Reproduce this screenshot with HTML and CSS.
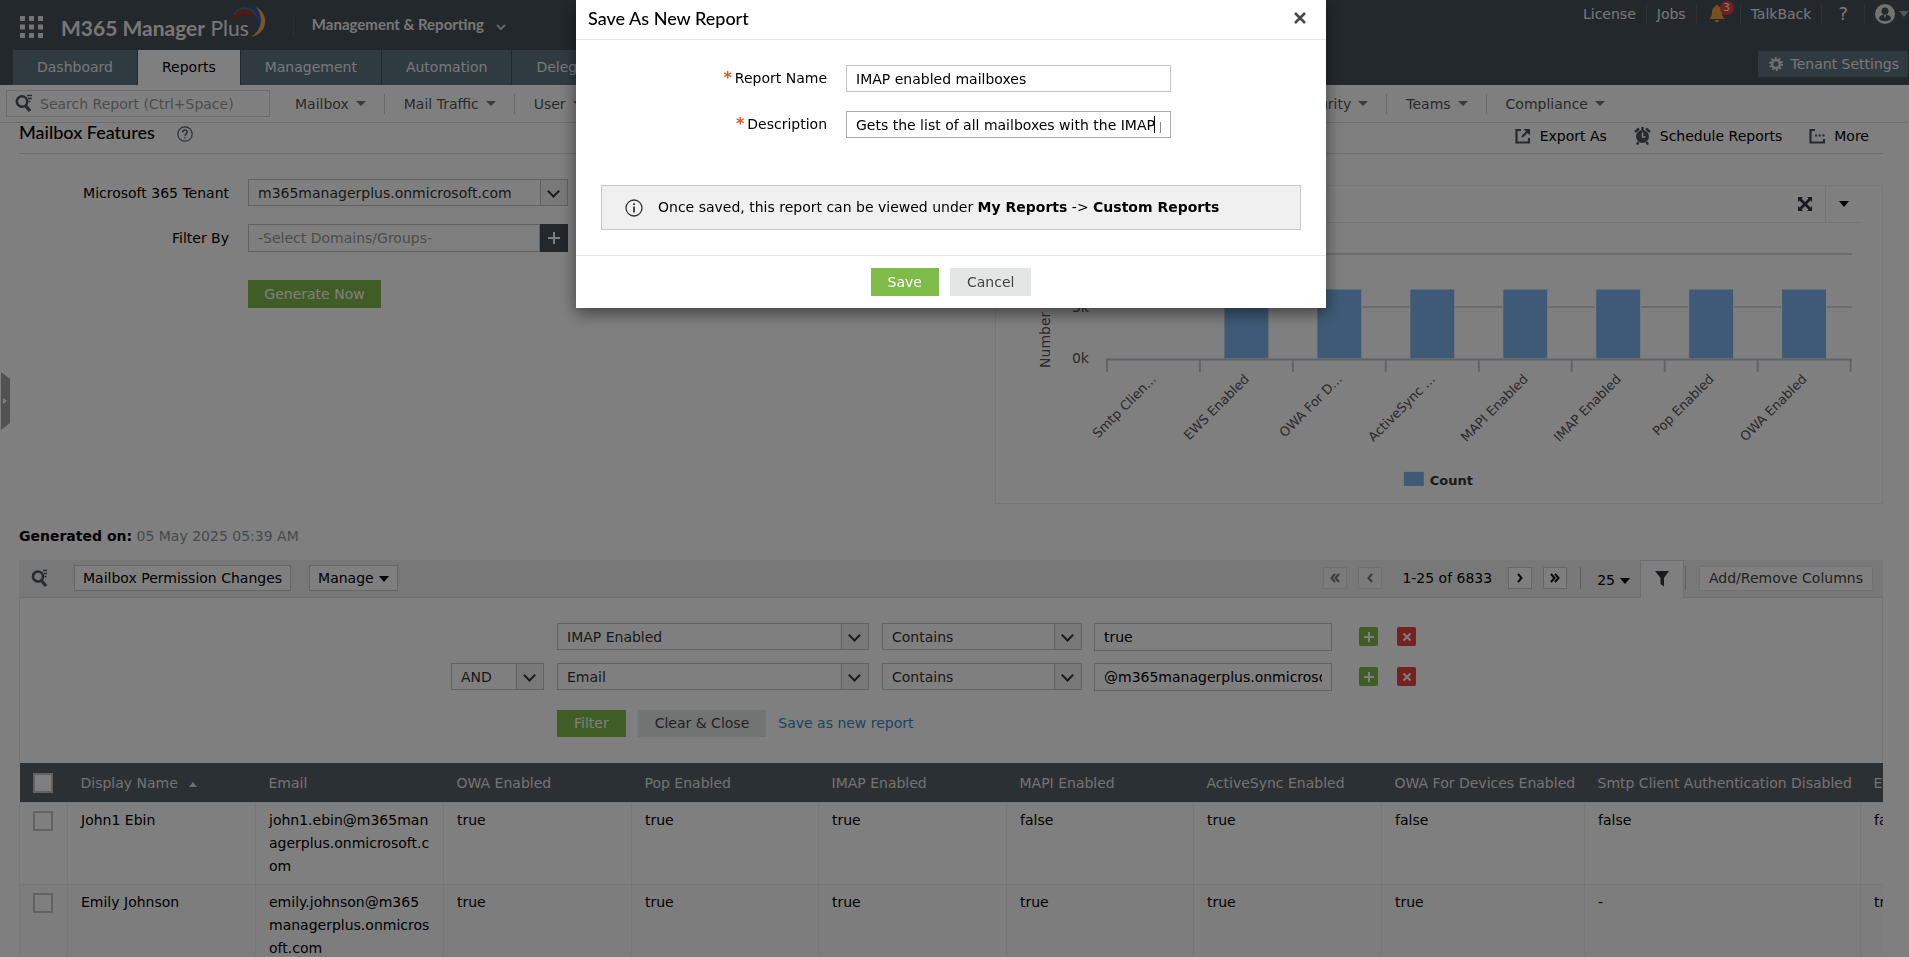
FILE: index.html
```html
<!DOCTYPE html>
<html lang="en">
<head>
  <meta charset="UTF-8">
  <meta name="viewport" content="width=device-width, initial-scale=1.0">
  <title>M365 Manager Plus - Mailbox Features</title>
  <link rel="stylesheet" href="styles.css">
</head>
<body>

  <!-- Top header -->
  <header class="header">
    <div class="header-top">
      <button class="icon-button" aria-label="Apps">
        <svg width="23" height="22" viewBox="0 0 23 22" fill="#e8e8e8">
          <path d="M0 0h5v5H0zM9 0h5v5H9zM18 0h5v5h-5zM0 8.500h5v5H0zM9 8.500h5v5H9zM18 8.500h5v5h-5zM0 17h5v5H0zM9 17h5v5H9zM18 17h5v5h-5z"/>
        </svg>
      </button>
      <div class="logo">
        <strong>M365 Manager</strong>&nbsp;Plus
        <svg class="logo-swirl" width="36" height="34" viewBox="0 0 36 34" fill="none">
          <path d="M2 16C6 5 18 4 25 14C18 8 9 9 2 16z" fill="#d0201c"/>
          <path d="M3 11C9 1 22 2 28 16" stroke="#5f6a76" stroke-width="2"/>
          <path d="M15 1C28 1 34 14 27 28C29 16 26 6 15 1z" fill="#2f55b0"/>
          <path d="M25 3C38 9 38 29 20 33C31 26 33 13 25 3z" fill="#f0a850"/>
        </svg>
      </div>
      <button class="product-menu">Management &amp; Reporting
        <svg width="10" height="6" viewBox="0 0 10 6" fill="none" stroke="#c8c8c8" stroke-width="2"><path d="M1 1l4 4 4-4"/></svg>
      </button>
      <ul class="user-links">
        <li><a href="#">License</a></li>
        <li><a href="#">Jobs</a></li>
        <li>
          <button class="icon-button bell" aria-label="Notifications">
            <svg width="16" height="18" viewBox="0 0 16 18" fill="#f0a23c"><path d="M8 0c1 0 1.500.6 1.500 1.500C12 2.200 13 4.500 13 7c0 4 1 5 3 7H0c2-2 3-3 3-7 0-2.500 1-4.800 3.500-5.500C6.500.6 7 0 8 0zM6 15h4c0 3-4 3-4 0z"/></svg>
            <span class="badge">3</span>
          </button>
        </li>
        <li><a href="#">TalkBack</a></li>
        <li><a href="#" class="help-link">?</a></li>
        <li>
          <button class="icon-button account" aria-label="Account">
            <svg width="20" height="20" viewBox="0 0 20 20"><circle cx="10" cy="10" r="10" fill="#e4e4e4"/><circle cx="10" cy="7" r="3.500" fill="#46505a"/><path d="M4 15c0-6 12-6 12 0-3 3-9 3-12 0z" fill="#46505a"/><path d="M9 11h2l-1 4z" fill="#e4e4e4"/></svg>
            <span class="caret"></span>
          </button>
        </li>
      </ul>
    </div>
    <div class="header-tabs">
      <nav class="tabs">
        <a href="#">Dashboard</a>
        <a href="#" class="active">Reports</a>
        <a href="#">Management</a>
        <a href="#">Automation</a>
        <a href="#">Delegation</a>
      </nav>
      <button class="tenant-settings">
        <svg width="14" height="14" viewBox="0 0 14 14" fill="none" stroke="#dfe3e5"><circle cx="7" cy="7" r="4" stroke-width="2.500"/><circle cx="7" cy="7" r="6" stroke-width="2" stroke-dasharray="1.800 1.970"/></svg>
        Tenant Settings
      </button>
    </div>
  </header>

  <!-- Report menu -->
  <div class="sub-nav">
    <div class="search-box">
      <svg width="18" height="19" viewBox="0 0 18 19" fill="none" stroke="#4c5660"><circle cx="7" cy="7.500" r="5.200" stroke-width="2.600"/><path d="M10 11l5 6" stroke-width="3.400"/><path d="M12 1.500h5M13 4.500h4M13.500 7.500h2" stroke-width="1.400"/></svg>
      <input type="text" placeholder="Search Report (Ctrl+Space)" aria-label="Search report">
    </div>
    <ul class="menu">
      <li><a href="#">Mailbox</a></li>
      <li><a href="#">Mail Traffic</a></li>
      <li><a href="#">User</a></li>
      <li><a href="#">Groups</a></li>
    </ul>
    <ul class="menu menu-right">
      <li><a href="#">Security</a></li>
      <li><a href="#">Teams</a></li>
      <li><a href="#">Compliance</a></li>
    </ul>
  </div>

  <main class="content">
    <div class="title-bar">
      <h1>Mailbox Features</h1>
      <button class="icon-button" aria-label="Help">
        <svg width="16" height="16" viewBox="0 0 16 16" fill="none" stroke="#555f66"><circle cx="8" cy="8" r="7.200" stroke-width="1.200"/><path d="M5.700 6.300c0-3 4.600-3 4.600-.2C10.300 8 8 7.800 8 9.800M8 11.200v1.400" stroke-width="1.500"/></svg>
      </button>
      <div class="actions">
        <button>
          <svg width="16" height="16" viewBox="0 0 16 16" fill="none" stroke="#4a545c" stroke-width="2.200"><path d="M6 2H1.500v12.500H14V10M7 9l6-6"/><path d="M8.500 1H15v6.500z" fill="#4a545c" stroke="none"/></svg>
          Export As
        </button>
        <button>
          <svg width="17" height="18" viewBox="0 0 17 18"><circle cx="8.500" cy="9.500" r="6.500" fill="#4a545c"/><path d="M8.500 5.500v4.500h3" fill="none" stroke="#fff" stroke-width="1.600"/><path d="M1 5l4-3.500M16 5l-4-3.500M4.500 15l-1.500 2.500M12.500 15l1.500 2.500M8.500 0v3" stroke="#4a545c" stroke-width="2.400"/></svg>
          Schedule Reports
        </button>
        <button>
          <svg width="16" height="16" viewBox="0 0 16 16" fill="none" stroke="#4a545c" stroke-width="2.200"><path d="M6 2H1.500v12.500H15V11"/><path d="M6 7.500h10" stroke-dasharray="2.200 1.500"/></svg>
          More
        </button>
      </div>
    </div>

    <div class="report">
      <form class="report-form">
        <div class="form-row">
          <label for="tenant">Microsoft 365 Tenant</label>
          <div class="select"><select id="tenant"><option>m365managerplus.onmicrosoft.com</option></select></div>
        </div>
        <div class="form-row">
          <label for="domains">Filter By</label>
          <div class="domain-picker">
            <input type="text" id="domains" placeholder="-Select Domains/Groups-">
            <button type="button" aria-label="Add domains">
              <svg width="14" height="14" viewBox="0 0 14 14" stroke="#fff" stroke-width="2"><path d="M7 1v12M1 7h12"/></svg>
            </button>
          </div>
        </div>
        <div class="form-row">
          <button type="button" class="btn btn-green generate">Generate Now</button>
        </div>
      </form>

      <section class="chart-panel">
        <div class="chart-tools">
          <button class="icon-button" aria-label="Expand">
            <svg width="14" height="14" viewBox="0 0 14 14" fill="#33373c"><path d="M0 0h5L3.500 1.500 7 5l3.500-3.500L9 0h5v5l-1.500-1.500L9 7l3.500 3.500L14 9v5H9l1.500-1.500L7 9l-3.500 3.500L5 14H0V9l1.500 1.500L5 7 1.500 3.500 0 5z"/></svg>
          </button>
          <button class="icon-button" aria-label="Chart options"><span class="caret"></span></button>
        </div>
        <svg class="chart" viewBox="0 0 886 280" id="chart">
          <g stroke="#d8d8d8" stroke-width="2">
            <path d="M111 31H856M111 84H856"/>
          </g>
          <text x="93" y="36" text-anchor="end">10k</text>
          <text x="93" y="89" text-anchor="end">5k</text>
          <text x="93" y="140" text-anchor="end">0k</text>
          <text transform="translate(54 145) rotate(-90)">Number of Mailboxes</text>
          <g id="chart-bars"></g>
          <path d="M111 136.500H856" stroke="#c0c8d0" stroke-width="2"/>
          <rect x="408" y="249" width="20" height="14" fill="#7cb5ec"/>
          <text x="434" y="262" class="legend">Count</text>
        </svg>
      </section>
    </div>

    <p class="generated"><strong>Generated on:</strong> 05 May 2025 05:39 AM</p>

    <!-- Result toolbar -->
    <div class="toolbar">
      <button class="icon-button toolbar-search" aria-label="Search">
        <svg width="18" height="19" viewBox="0 0 18 19" fill="none" stroke="#4c5660"><circle cx="7" cy="7.500" r="5" stroke-width="2.600"/><path d="M10 11l5 6" stroke-width="3"/><path d="M12 1.500h4M13 4.500h3M13.500 7.500h2" stroke-width="1.400"/></svg>
      </button>
      <button class="tool">Mailbox Permission Changes</button>
      <button class="tool">Manage<span class="caret"></span></button>
      <div class="pager">
        <button class="page disabled" aria-label="First page"><svg width="10" height="10" viewBox="0 0 10 10"><path d="M5 1L1.500 5 5 9M9 1L5.500 5 9 9"/></svg></button>
        <button class="page disabled" aria-label="Previous page"><svg width="10" height="10" viewBox="0 0 10 10"><path d="M7 1L3.500 5 7 9"/></svg></button>
        <span class="range">1-25 of 6833</span>
        <button class="page" aria-label="Next page"><svg width="10" height="10" viewBox="0 0 10 10"><path d="M3 1l3.500 4L3 9"/></svg></button>
        <button class="page" aria-label="Last page"><svg width="10" height="10" viewBox="0 0 10 10"><path d="M1 1l3.500 4L1 9M5 1l3.500 4L5 9"/></svg></button>
      </div>
      <button class="page-size">25<span class="caret"></span></button>
      <button class="filter-tab" aria-label="Filter">
        <svg width="14" height="16" viewBox="0 0 14 16" fill="#33373f"><path d="M0 0h14L9 7v8.500L5.500 13V7z"/></svg>
      </button>
      <div class="columns-cell"><button class="columns">Add/Remove Columns</button></div>
    </div>

    <!-- Filter conditions -->
    <div class="filters">
      <div class="filter-row">
        <div class="operator"></div>
        <div class="select field"><select aria-label="Column"><option>IMAP Enabled</option></select></div>
        <div class="select condition"><select aria-label="Condition"><option>Contains</option></select></div>
        <input type="text" class="value" value="true" aria-label="Value">
        <button class="row-icon add" aria-label="Add condition"><svg width="12" height="12" viewBox="0 0 12 12"><path d="M6 1v10M1 6h10"/></svg></button>
        <button class="row-icon remove" aria-label="Remove condition"><svg width="12" height="12" viewBox="0 0 12 12"><path d="M2.500 2.500l7 7M9.500 2.500l-7 7"/></svg></button>
      </div>
      <div class="filter-row">
        <div class="select operator"><select aria-label="Operator"><option>AND</option></select></div>
        <div class="select field"><select aria-label="Column"><option>Email</option></select></div>
        <div class="select condition"><select aria-label="Condition"><option>Contains</option></select></div>
        <input type="text" class="value" value="@m365managerplus.onmicrosoft.com" aria-label="Value">
        <button class="row-icon add" aria-label="Add condition"><svg width="12" height="12" viewBox="0 0 12 12"><path d="M6 1v10M1 6h10"/></svg></button>
        <button class="row-icon remove" aria-label="Remove condition"><svg width="12" height="12" viewBox="0 0 12 12"><path d="M2.500 2.500l7 7M9.500 2.500l-7 7"/></svg></button>
      </div>
      <div class="filter-buttons">
        <button class="btn btn-green">Filter</button>
        <button class="btn btn-gray">Clear &amp; Close</button>
        <a href="#">Save as new report</a>
      </div>
    </div>

    <div class="table-wrapper">
      <table>
        <colgroup>
          <col class="col-check"><col><col><col><col class="col-flag"><col><col class="col-flag"><col><col class="col-devices"><col class="col-smtp"><col>
        </colgroup>
        <thead>
          <tr>
            <th><input type="checkbox" aria-label="Select all"></th>
            <th>Display Name <span class="sort-up"></span></th>
            <th>Email</th>
            <th>OWA Enabled</th>
            <th>Pop Enabled</th>
            <th>IMAP Enabled</th>
            <th>MAPI Enabled</th>
            <th>ActiveSync Enabled</th>
            <th>OWA For Devices Enabled</th>
            <th>Smtp Client Authentication Disabled</th>
            <th>EWS Enabled</th>
          </tr>
        </thead>
        <tbody>
          <tr>
            <td><input type="checkbox" aria-label="Select John1 Ebin"></td>
            <td>John1 Ebin</td>
            <td>john1.ebin@m365man<wbr>agerplus.onmicrosoft.c<wbr>om</td>
            <td>true</td>
            <td>true</td>
            <td>true</td>
            <td>false</td>
            <td>true</td>
            <td>false</td>
            <td>false</td>
            <td>false</td>
          </tr>
          <tr>
            <td><input type="checkbox" aria-label="Select Emily Johnson"></td>
            <td>Emily Johnson</td>
            <td>emily.johnson@m365<wbr>managerplus.onmicros<wbr>oft.com</td>
            <td>true</td>
            <td>true</td>
            <td>true</td>
            <td>true</td>
            <td>true</td>
            <td>true</td>
            <td>-</td>
            <td>true</td>
          </tr>
        </tbody>
      </table>
    </div>
  </main>

  <button class="side-handle" aria-label="Open side panel">
    <svg width="9" height="58" viewBox="0 0 9 58"><path d="M0 0l9 7v44l-9 7z" fill="#a4a4a4"/><path d="M2 26l4 3-4 3z" fill="#fff"/></svg>
  </button>

  <!-- Save dialog -->
  <div class="overlay">
    <div class="modal" role="dialog" aria-labelledby="modal-title">
      <div class="modal-header">
        <h2 id="modal-title">Save As New Report</h2>
        <button class="icon-button" aria-label="Close">
          <svg width="12" height="12" viewBox="0 0 12 12" stroke="#4a4a4a" stroke-width="2.600"><path d="M1 1l10 10M11 1L1 11"/></svg>
        </button>
      </div>
      <div class="modal-body">
        <div class="modal-row">
          <label for="report-name"><span class="required">*</span>Report Name</label>
          <input type="text" id="report-name" value="IMAP enabled mailboxes">
        </div>
        <div class="modal-row">
          <label for="description"><span class="required">*</span>Description</label>
          <div class="typing">
            <input type="text" id="description" value="Gets the list of all mailboxes with the IMAP property enabled">
            <span class="text-cursor"></span>
          </div>
        </div>
        <div class="info">
          <svg width="18" height="18" viewBox="0 0 18 18" fill="none" stroke="#333"><circle cx="9" cy="9" r="8" stroke-width="1.300"/><path d="M9 7.500v6M9 4.300v1.800" stroke-width="1.800"/></svg>
          <p>Once saved, this report can be viewed under <strong>My Reports</strong> -&gt; <strong>Custom Reports</strong></p>
        </div>
      </div>
      <div class="modal-footer">
        <button class="btn btn-green">Save</button>
        <button class="btn btn-gray">Cancel</button>
      </div>
    </div>
  </div>

  <script>
    const labels = ['Smtp Clien...', 'EWS Enabled', 'OWA For D...', 'ActiveSync ...', 'MAPI Enabled', 'IMAP Enabled', 'Pop Enabled', 'OWA Enabled'];
    const values = [0, 6.6, 6.6, 6.6, 6.6, 6.6, 6.6, 6.6];
    const step = 93;

    function renderChart() {
      let out = '';
      labels.forEach((label, i) => {
        const x = 111 + step * i;
        const height = Math.round(values[i] * 10.6);
        out += `<path d="M${x} 136v13" stroke="#c0c8d0" stroke-width="2"/>`;
        if (height) {
          out += `<rect x="${x + 24}" y="${136 - height}" width="45" height="${height}" fill="#7cb5ec" stroke="#fff"/>`;
        }
        out += `<text class="tick" text-anchor="end" transform="translate(${x + 50} 157) rotate(-45)">${label}</text>`;
      });
      out += '<path d="M855 136v13" stroke="#c0c8d0" stroke-width="2"/>';
      document.getElementById('chart-bars').innerHTML = out;
    }

    document.addEventListener('DOMContentLoaded', renderChart);
  </script>
</body>
</html>
```

FILE: styles.css
```css
* {
  box-sizing: border-box;
}

body {
  margin: 0;
  height: 100vh;
  overflow: hidden;
  font-family: "DejaVu Sans", Verdana, sans-serif;
  font-size: 14px;
  line-height: 20px;
  color: #000;
  background-color: #fff;
}

button, input, select {
  font-family: inherit;
  font-size: inherit;
  line-height: inherit;
  color: inherit;
  border-radius: 0;
}

button {
  padding: 0;
  border: none;
  background: none;
  cursor: pointer;
}

svg {
  display: block;
  flex: none;
}

ul {
  list-style: none;
  margin: 0;
  padding: 0;
}

a {
  text-decoration: none;
}

h1, h2, p {
  margin: 0;
}

.icon-button {
  display: flex;
  align-items: center;
}

.caret {
  display: inline-block;
  border: 5px solid transparent;
  border-top: 6px solid #000;
  border-bottom: none;
  vertical-align: middle;
}

/* Header */
.header {
  background-color: #46505a;
  color: #eee;
}

.header-top {
  display: flex;
  align-items: center;
  height: 50px;
  padding-left: 20px;
}

.header-top > .icon-button {
  padding-top: 4px;
}

.logo {
  display: flex;
  align-items: center;
  margin-left: 18px;
  padding-top: 6px;
  font-family: Lato, sans-serif;
  font-size: 21px;
}

.logo-swirl {
  margin-left: -18px;
  margin-top: -14px;
}

.product-menu {
  display: flex;
  align-items: center;
  gap: 12px;
  margin-left: 26px;
  padding-left: 18px;
  padding-bottom: 2px;
  border-left: 1px solid #55606a;
  font-family: Lato, sans-serif;
  font-size: 15px;
  font-weight: bold;
}

.product-menu svg {
  margin-top: 6px;
}

.user-links {
  display: flex;
  align-self: flex-start;
  margin-left: auto;
  padding-top: 4px;
}

.user-links li {
  display: flex;
  align-items: center;
  height: 20px;
  padding: 0 10px;
  border-left: 1px solid #5c6670;
}

.user-links li:first-child {
  border-left: none;
}

.user-links li:last-child {
  padding-right: 0;
}

.user-links a {
  color: #eee;
}

.user-links .help-link {
  padding: 0 6px;
  font-size: 18px;
}

.bell {
  position: relative;
  padding: 0 5px 0 2px;
}

.badge {
  position: absolute;
  top: -4px;
  right: -4px;
  width: 14px;
  height: 14px;
  border-radius: 50%;
  background-color: #e8413c;
  color: #fff;
  font-size: 10px;
  line-height: 14px;
}

.account {
  gap: 4px;
}

.account .caret {
  border-top-color: #aaa;
}

.header-tabs {
  display: flex;
  justify-content: space-between;
  height: 35px;
  padding: 0 1px 0 13px;
}

.tabs {
  display: flex;
}

.tabs a {
  padding: 7px 24px;
  border-right: 1px solid #46505a;
  background-color: #607682;
  color: #eee;
}

.tabs a.active {
  background-color: #fff;
  color: #000;
}

.tenant-settings {
  display: flex;
  align-items: center;
  gap: 8px;
  height: 26px;
  margin-top: 1px;
  padding: 0 9px 0 11px;
  background-color: #607682;
}

/* Report menu */
.sub-nav {
  display: flex;
  align-items: center;
  height: 38px;
  padding-left: 6px;
  padding-right: 286px;
  border-bottom: 1px solid #ddd;
  color: #555;
}

.search-box {
  display: flex;
  align-items: center;
  gap: 7px;
  width: 264px;
  height: 27px;
  padding-left: 8px;
  border: 1px solid #d8d8d8;
}

.search-box input {
  flex: 1;
  min-width: 0;
  padding: 0;
  border: none;
  outline: none;
}

input::placeholder {
  color: #999;
  opacity: 1;
}

.menu {
  display: flex;
  margin-left: 6px;
}

.menu-right {
  margin-left: auto;
}

.menu a {
  display: flex;
  align-items: center;
  gap: 7px;
  padding: 0 18px 0 19px;
  border-right: 1px solid #d0d0d0;
  color: #555;
}

.menu li:last-child a {
  border-right: none;
}

.menu a::after {
  content: "";
  border: 5px solid transparent;
  border-top: 5px solid #777;
  border-bottom: none;
}

/* Page title */
.content {
  padding: 0 26px 0 19px;
}

.title-bar {
  display: flex;
  align-items: center;
  height: 31px;
  border-bottom: 1px solid #ddd;
}

.title-bar h1 {
  margin-right: 22px;
  padding-bottom: 12px;
  font-family: Lato, sans-serif;
  font-size: 18px;
  font-weight: 500;
}

.title-bar > .icon-button {
  padding-bottom: 8px;
}

.actions {
  display: flex;
  gap: 27px;
  margin-left: auto;
  padding-right: 14px;
  padding-bottom: 5px;
}

.actions button {
  display: flex;
  align-items: center;
  gap: 9px;
}

/* Form and chart */
.report {
  display: grid;
  grid-template-columns: 11fr 10fr;
}

.report-form {
  display: flex;
  flex-direction: column;
  gap: 18px;
  padding-top: 25px;
}

.form-row {
  display: flex;
  align-items: center;
  gap: 19px;
}

.form-row label {
  width: 210px;
  text-align: right;
}

.form-row .select,
.domain-picker {
  width: 320px;
}

.select {
  position: relative;
  display: flex;
  height: 27px;
  border: 1px solid #c4c4c4;
}

.select select {
  flex: 1;
  min-width: 0;
  padding: 0 30px 0 9px;
  border: none;
  background: none;
  color: #333;
  appearance: none;
}

/* Arrow box over the right end of a select */
.select::before {
  content: "";
  position: absolute;
  top: 0;
  right: 0;
  bottom: 0;
  width: 26px;
  border-left: 1px solid #c4c4c4;
  background-color: #f2f2f2;
  pointer-events: none;
}

.select::after {
  content: "";
  position: absolute;
  top: 7px;
  right: 9px;
  width: 7px;
  height: 7px;
  border: solid #333;
  border-width: 0 2px 2px 0;
  transform: rotate(45deg);
  pointer-events: none;
}

.domain-picker {
  display: flex;
  height: 28px;
}

.domain-picker input {
  flex: 1;
  min-width: 0;
  padding: 0 9px;
  border: 1px solid #c4c4c4;
}

.domain-picker button {
  display: flex;
  align-items: center;
  justify-content: center;
  width: 28px;
  background-color: #46505a;
}

.btn {
  height: 27px;
  color: #fff;
}

.btn-green {
  background-color: #7fbb48;
}

.btn-gray {
  background-color: #e4e6e6;
  color: #444;
}

.generate {
  width: 133px;
  height: 28px;
  margin-left: 229px;
  margin-top: 10px;
}

.chart-panel {
  margin-top: 31px;
  border: 1px solid #ececec;
}

.chart-tools {
  display: flex;
  justify-content: flex-end;
  height: 37px;
  margin: 0 20px;
  border-bottom: 1px solid #eaeaea;
}

.chart-tools .icon-button {
  padding: 0 13px;
}

.chart-tools .icon-button + .icon-button {
  border-left: 1px solid #eaeaea;
}

.chart {
  width: 100%;
  font-family: "DejaVu Sans", Verdana, sans-serif;
  font-size: 14px;
  fill: #555;
}

.chart .tick {
  font-size: 13px;
}

.chart .legend {
  font-size: 13px;
  font-weight: bold;
  fill: #333;
}

.generated {
  padding: 22px 0 14px;
  color: #8a9499;
}

.generated strong {
  color: #000;
}

/* Toolbar above the table */
.toolbar {
  display: flex;
  align-items: center;
  height: 38px;
  background-color: #f0f0f0;
  border-bottom: 1px solid #ddd;
}

.toolbar-search {
  margin: 0 25px 0 12px;
}

.tool {
  height: 26px;
  margin-right: 18px;
  padding: 0 8px;
  border: 1px solid #ccc;
  background-color: #fff;
}

.tool .caret {
  margin-left: 5px;
}

.pager {
  display: flex;
  align-items: center;
  margin-left: auto;
  padding-right: 13px;
  border-right: 1px solid #bbb;
}

.page {
  display: flex;
  align-items: center;
  justify-content: center;
  width: 24px;
  height: 22px;
  margin-right: 11px;
  border: 1px solid #ccc;
  background-color: #fff;
}

.page:last-child {
  margin-right: 0;
}

.page path {
  fill: none;
  stroke: #111;
  stroke-width: 2;
}

.page.disabled {
  border-color: #e0e0e0;
  background-color: #f6f6f6;
}

.page.disabled path {
  stroke: #777;
}

.range {
  margin: 0 16px 0 9px;
}

.page-size {
  padding: 3px 10px 0 16px;
}

.page-size .caret {
  margin-left: 5px;
}

.filter-tab {
  display: flex;
  align-items: center;
  justify-content: center;
  width: 44px;
  height: 38px;
  margin-bottom: -1px;
  border: 1px solid #ddd;
  border-bottom: none;
  background-color: #fff;
}

.columns-cell {
  display: flex;
  align-items: center;
  height: 24px;
  margin-left: 1px;
  padding: 0 10px 0 13px;
  border-left: 1px solid #bbb;
}

.columns {
  height: 25px;
  padding: 0 9px;
  border: 1px solid #e4e4e4;
  background-color: #fff;
  color: #444;
}

/* Filters */
.filters {
  padding: 25px 0 26px 431px;
  border: solid #e8e8e8;
  border-width: 0 1px;
}

.filter-row {
  display: flex;
  align-items: center;
  height: 28px;
  margin-bottom: 12px;
}

.operator {
  width: 93px;
  margin-right: 13px;
}

.field {
  width: 312px;
  margin-right: 13px;
}

.condition {
  width: 200px;
  margin-right: 12px;
}

.value {
  width: 238px;
  height: 28px;
  margin-right: 27px;
  padding: 0 9px;
  border: 1px solid #c4c4c4;
}

.row-icon {
  display: flex;
  align-items: center;
  justify-content: center;
  width: 19px;
  height: 19px;
  margin-right: 19px;
  border-radius: 2px;
}

.row-icon path {
  stroke: #fff;
  stroke-width: 2;
}

.add {
  background-color: #7fbb48;
}

.remove {
  background-color: #e8453f;
}

.filter-buttons {
  display: flex;
  align-items: center;
  gap: 12px;
  margin-top: 19px;
  padding-left: 106px;
}

.filter-buttons .btn {
  padding: 0 17px;
}

.filter-buttons a {
  color: #3a87c0;
}

/* Results table */
.table-wrapper {
  overflow: hidden;
}

table {
  width: 100%;
  table-layout: fixed;
  border-collapse: collapse;
}

col {
  width: 188px;
}

.col-check {
  width: 48px;
}

.col-flag {
  width: 187px;
}

.col-devices {
  width: 203px;
}

.col-smtp {
  width: 276px;
}

th {
  height: 40px;
  padding: 0 13px;
  background-color: #566068;
  color: #e4e4e4;
  font-weight: normal;
  text-align: left;
  white-space: nowrap;
}

td {
  padding: 6px 13px;
  border: 1px solid #ececec;
  line-height: 23px;
  vertical-align: top;
}

tr td:first-child {
  padding-top: 8px;
}

tbody tr:nth-child(even) {
  background-color: #fafafa;
}

td input, th input {
  display: block;
  width: 20px;
  height: 20px;
  margin: 0;
  border: 2px solid #c4c4c4;
  background-color: #fff;
  appearance: none;
}

.sort-up {
  display: inline-block;
  margin-left: 7px;
  border: 4px solid transparent;
  border-bottom: 5px solid #ddd;
  border-top: none;
  vertical-align: 1px;
}

.side-handle {
  position: fixed;
  top: 372px;
  left: 1px;
}

/* Modal */
.overlay {
  position: fixed;
  inset: 0;
  display: flex;
  justify-content: center;
  align-items: flex-start;
  padding-right: 7px;
  background-color: rgba(0, 0, 0, 0.5);
}

.modal {
  width: 750px;
  background-color: #fff;
  box-shadow: 0 5px 15px rgba(0, 0, 0, 0.5);
}

.modal-header {
  display: flex;
  align-items: center;
  justify-content: space-between;
  height: 40px;
  padding: 0 20px 4px 12px;
  border-bottom: 1px solid #e5e5e5;
}

.modal-header h2 {
  font-family: Lato, sans-serif;
  font-size: 18px;
  font-weight: 500;
}

.modal-body {
  padding: 25px;
}

.modal-row {
  display: flex;
  align-items: center;
  gap: 19px;
  margin-bottom: 19px;
}

.modal-row label {
  width: 226px;
  padding-bottom: 2px;
  text-align: right;
}

.modal-row input {
  width: 325px;
  height: 27px;
  padding: 0 9px;
  border: 1px solid #c4c4c4;
  outline: none;
}

.typing {
  position: relative;
  display: flex;
}

.typing input {
  border-color: #aaa;
}

.text-cursor {
  position: absolute;
  top: 5px;
  right: 16px;
  width: 1px;
  height: 17px;
  background-color: #000;
}

.required {
  margin-right: 3px;
  color: #d9581c;
  font-size: 16px;
  font-weight: bold;
  line-height: 16px;
}

.info {
  display: flex;
  align-items: center;
  gap: 15px;
  height: 45px;
  margin-top: 47px;
  padding: 0 23px;
  border: 1px solid #c8c8c8;
  background-color: #f0f0f0;
}

.info p {
  padding-bottom: 2px;
}

.modal-footer {
  display: flex;
  justify-content: center;
  gap: 11px;
  padding: 12px 0;
  border-top: 1px solid #e5e5e5;
}

.modal-footer .btn {
  height: 28px;
  padding: 0 17px;
}
```
